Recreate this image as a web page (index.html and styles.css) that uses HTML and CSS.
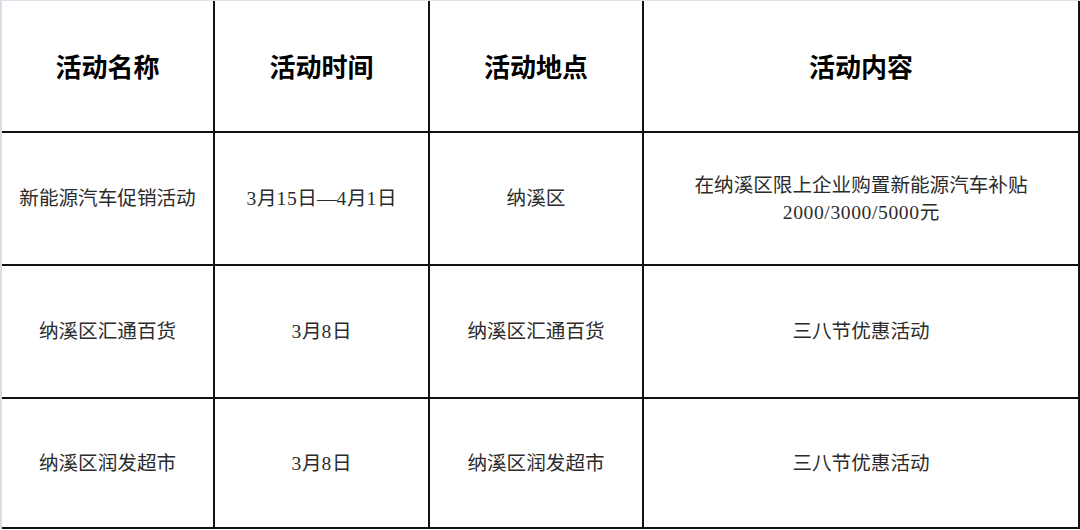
FILE: index.html
```html
<!DOCTYPE html>
<html lang="zh-CN">
<head>
<meta charset="utf-8">
<title>活动</title>
<link rel="stylesheet" href="styles.css">
</head>
<body>
<div class="frame">
  <div class="grid">
    <div class="cell head">活动名称</div>
    <div class="cell head">活动时间</div>
    <div class="cell head">活动地点</div>
    <div class="cell head">活动内容</div>

    <div class="cell">新能源汽车促销活动</div>
    <div class="cell"><p class="txt"><span class="num">3</span>月<span class="num">15</span>日—<span class="num">4</span>月<span class="num">1</span>日</p></div>
    <div class="cell">纳溪区</div>
    <div class="cell"><p class="txt">在纳溪区限上企业购置新能源汽车补贴<br><span class="num">2000/3000/5000</span>元</p></div>

    <div class="cell">纳溪区汇通百货</div>
    <div class="cell"><p class="txt"><span class="num">3</span>月<span class="num">8</span>日</p></div>
    <div class="cell">纳溪区汇通百货</div>
    <div class="cell">三八节优惠活动</div>

    <div class="cell">纳溪区润发超市</div>
    <div class="cell"><p class="txt"><span class="num">3</span>月<span class="num">8</span>日</p></div>
    <div class="cell">纳溪区润发超市</div>
    <div class="cell">三八节优惠活动</div>
  </div>
</div>
</body>
</html>
```
FILE: styles.css
```css
html, body {
  margin: 0;
  padding: 0;
  background: #ffffff;
}
body {
  width: 1080px;
  height: 530px;
  overflow: hidden;
  font-family: "Liberation Serif", "Noto Sans CJK SC", serif;
}
.frame {
  border-top: 1px solid #dde1ea;
  border-left: 2px solid #d9dde6;
  width: 1078px;
}
.grid {
  display: grid;
  grid-template-columns: 211px 213px 212px 434px;
  grid-template-rows: 130px 131px 131px 128px;
  gap: 2px;
  padding: 0 2px 2px 0;
  background: #111111;
}
.cell {
  background: #ffffff;
  display: flex;
  align-items: center;
  justify-content: center;
  text-align: center;
  font-size: 19.6px;
  line-height: 27px;
  color: #2b2b2b;
}
.txt {
  margin: 0;
}
.num {
  letter-spacing: 0.6px;
}
.head {
  font-size: 26px;
  font-weight: 700;
  color: #000000;
  padding-top: 4px;
}
```
